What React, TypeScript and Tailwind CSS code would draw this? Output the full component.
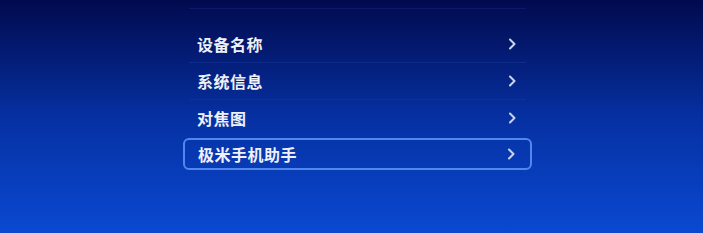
import React from "react";

const items = ["设备名称", "系统信息", "对焦图", "极米手机助手"];

function Chevron() {
  return (
    <svg width="9" height="12" viewBox="0 0 9 12" fill="none">
      <path d="M2 1.5 L6.5 6 L2 10.5" stroke="#c9d4ee" strokeWidth="2" strokeLinecap="round" strokeLinejoin="round" />
    </svg>
  );
}

export default function App() {
  return (
    <div
      className="w-[703px] h-[233px] overflow-hidden bg-gradient-to-b from-[#020a4e] via-[#0630a2] to-[#0a49d2]"
      style={{ fontFamily: '"Noto Sans CJK SC", "Noto Sans", sans-serif' }}
    >
      <div className="ml-[183px] w-[349px] pt-[8px]">
        <div className="mx-[6px] h-px bg-[#10207a]/70" />
        <div className="flex flex-col mt-[17px]">
          {items.map((t, i) => {
            const sel = i === items.length - 1;
            return (
              <div key={t} className="flex flex-col">
                {i > 0 && !sel && <div className="mx-[6px] h-px bg-[#1a3a9c]/50" />}
                <div
                  className={
                    sel
                      ? "mt-[2px] h-[32px] flex items-center justify-between pl-[13px] pr-[14px] rounded-[6px] border-2 border-[#5288ee] bg-[#0a3cb6]/20"
                      : "h-[36px] flex items-center justify-between pl-[14px] pr-[15px]"
                  }
                >
                  <span className="text-[16px] leading-none font-bold text-[#eef1f8] tracking-[0.5px]">{t}</span>
                  <Chevron />
                </div>
              </div>
            );
          })}
        </div>
      </div>
    </div>
  );
}
